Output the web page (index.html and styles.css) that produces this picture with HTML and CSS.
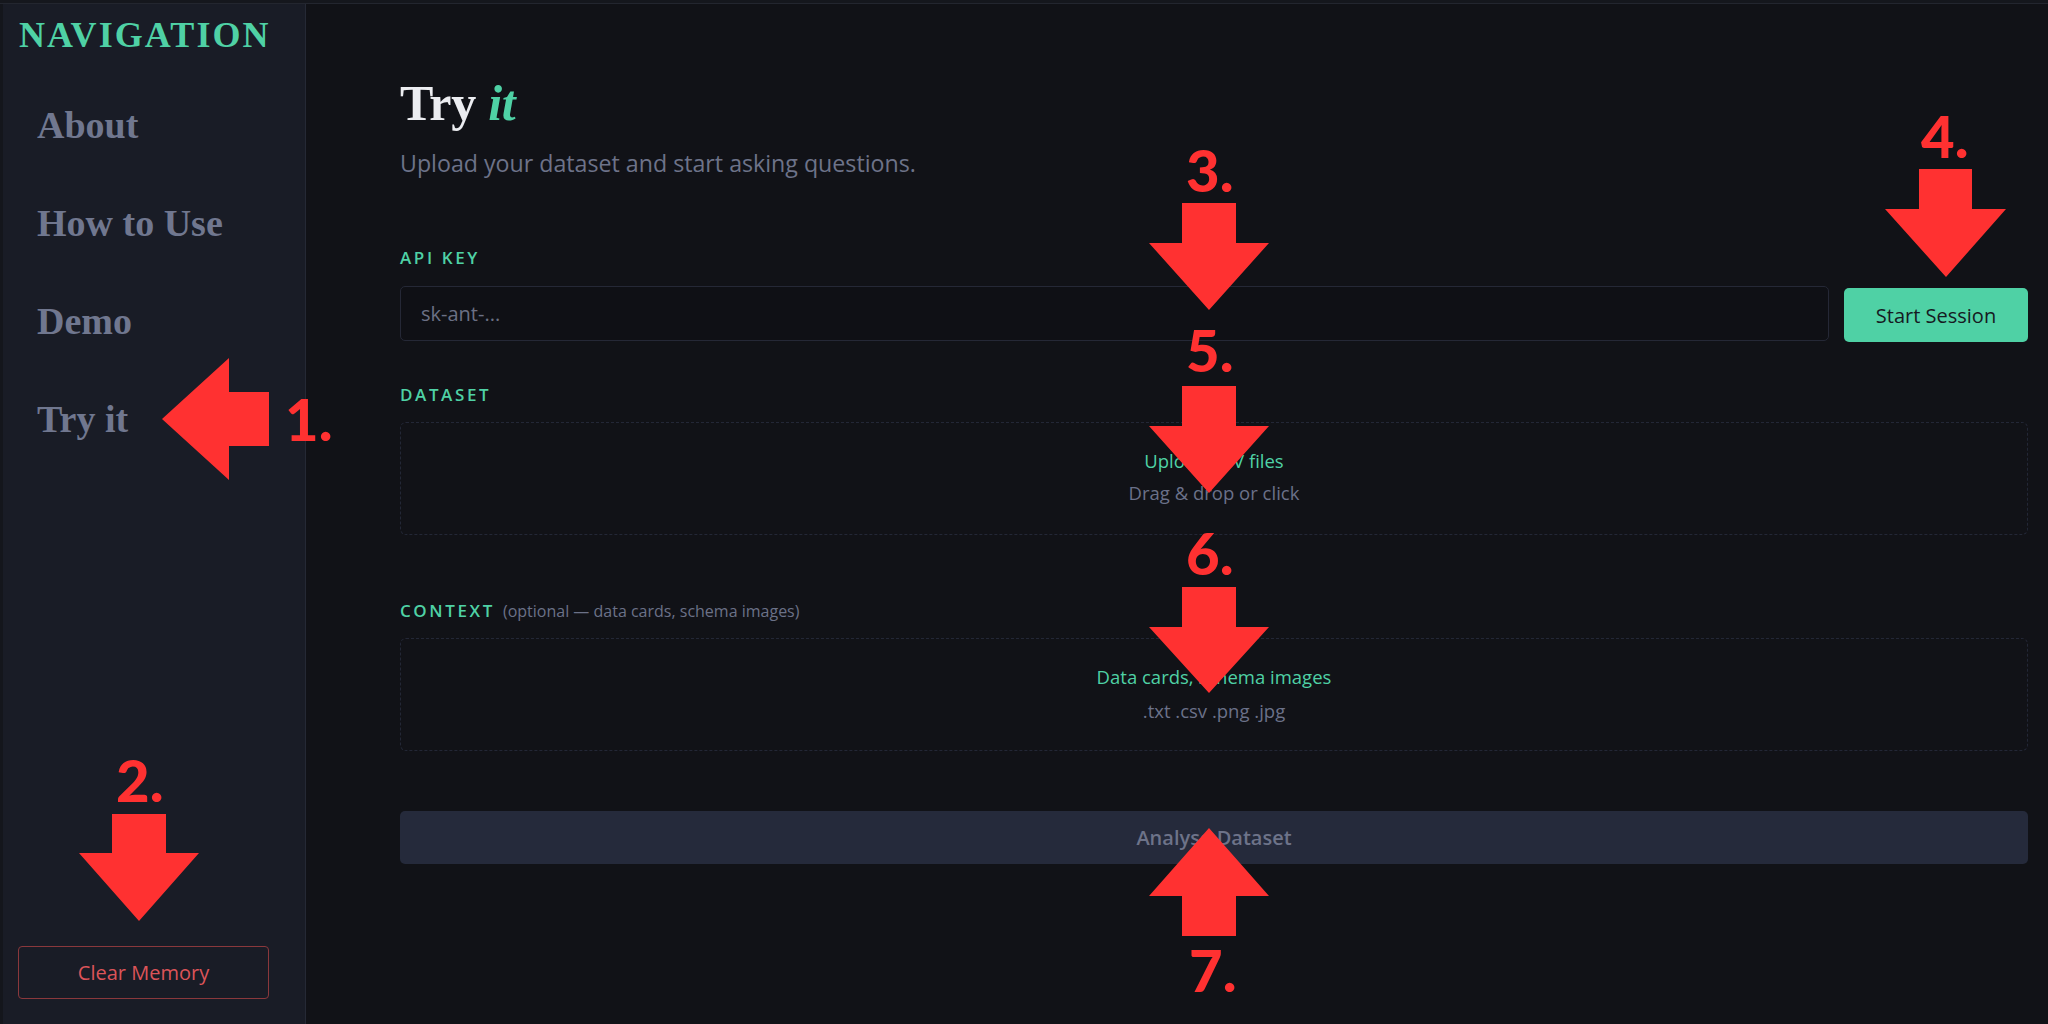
FILE: index.html
```html
<!DOCTYPE html>
<html lang="en">
<head>
<meta charset="utf-8">
<title>Try it</title>
<link rel="stylesheet" href="styles.css">
</head>
<body>
<div class="app">
  <aside class="sidebar">
    <div class="nav-title">NAVIGATION</div>
    <nav class="nav">
      <a class="nav-item">About</a>
      <a class="nav-item">How to Use</a>
      <a class="nav-item">Demo</a>
      <a class="nav-item">Try it</a>
    </nav>
    <button class="clear-btn">Clear Memory</button>
  </aside>
  <main class="main">
    <h1 class="title">Try <em>it</em></h1>
    <p class="subtitle">Upload your dataset and start asking questions.</p>

    <section class="field field-api">
      <div class="label">API KEY</div>
      <div class="api-row">
        <div class="input"><span class="placeholder">sk-ant-...</span></div>
        <button class="start-btn">Start Session</button>
      </div>
    </section>

    <section class="field field-dataset">
      <div class="label">DATASET</div>
      <div class="dropzone">
        <div class="dz-main">Upload CSV files</div>
        <div class="dz-sub">Drag &amp; drop or click</div>
      </div>
    </section>

    <section class="field field-context">
      <div class="label">CONTEXT <span class="label-note">(optional — data cards, schema images)</span></div>
      <div class="dropzone dropzone-ctx">
        <div class="dz-main">Data cards, schema images</div>
        <div class="dz-sub">.txt .csv .png .jpg</div>
      </div>
    </section>

    <button class="analyse-btn">Analyse Dataset</button>
  </main>
</div>

<svg class="annotations" width="2048" height="1024" viewBox="0 0 2048 1024" xmlns="http://www.w3.org/2000/svg">
  <g class="arrow">
    <!-- 1: left arrow -->
    <polygon points="162,419 229,358 229,392 269,392 269,446 229,446 229,480"/>
    <!-- 2 -->
    <polygon points="112,814 166,814 166,853 199,853 139,921 79,853 112,853"/>
    <!-- 3 -->
    <polygon points="1182,203 1236,203 1236,243 1269,243 1209,310 1149,243 1182,243"/>
    <!-- 4 -->
    <polygon points="1919,169 1972,169 1972,209 2006,209 1946,277 1885,209 1919,209"/>
    <!-- 5 -->
    <polygon points="1182,386 1236,386 1236,426 1269,426 1209,493 1149,426 1182,426"/>
    <!-- 6 -->
    <polygon points="1182,587 1236,587 1236,627 1269,627 1209,693 1149,627 1182,627"/>
    <!-- 7: up arrow -->
    <polygon points="1209,828 1269,896 1236,896 1236,936 1182,936 1182,896 1149,896"/>
  </g>
  <g class="nums">
    <text x="285" y="441">1.</text>
    <text x="116" y="802">2.</text>
    <text x="1186" y="192">3.</text>
    <text x="1921" y="158">4.</text>
    <text x="1186" y="372">5.</text>
    <text x="1186" y="575">6.</text>
    <text x="1189" y="992">7.</text>
  </g>
</svg>
</body>
</html>
```

FILE: styles.css
```css
* { box-sizing: border-box; }

html, body {
  margin: 0;
  padding: 0;
  width: 2048px;
  height: 1024px;
  overflow: hidden;
  background: #111217;
}

body {
  position: relative;
  font-family: "Open Sans", "Liberation Sans", sans-serif;
  border-top: 3px solid #15171d;
}

.app {
  display: flex;
  height: 1021px;
  border-top: 1px solid #23262f;
}

/* Sidebar */
.sidebar {
  width: 306px;
  flex: 0 0 306px;
  background: #191c26;
  border-left: 3px solid #14161c;
  border-right: 1px solid #252935;
  display: flex;
  flex-direction: column;
  padding: 13px 0 25px 15px;
}

.nav-title {
  font-family: "Liberation Serif", serif;
  font-weight: 700;
  font-size: 36px;
  line-height: 36px;
  letter-spacing: 2.1px;
  color: #4fd1a5;
  margin-left: 1px;
}

.nav {
  display: flex;
  flex-direction: column;
  margin-top: 23px;
  padding-left: 19px;
}

.nav-item {
  font-family: "Liberation Serif", serif;
  font-weight: 700;
  font-size: 38px;
  line-height: 98px;
  height: 98px;
  color: #70778f;
}

.clear-btn {
  margin-top: auto;
  width: 251px;
  height: 53px;
  background: transparent;
  border: 1px solid #8a383c;
  border-radius: 4px;
  color: #dc5459;
  font-family: "Open Sans", "Liberation Sans", sans-serif;
  font-size: 20px;
  font-weight: 500;
}

/* Main */
.main {
  flex: 1;
  padding: 72px 20px 0 94px;
}

.title {
  margin: 0;
  font-family: "Liberation Serif", serif;
  font-weight: 700;
  font-size: 50px;
  line-height: 55px;
  color: #ecedf1;
  letter-spacing: -0.3px;
}

.title em {
  color: #4fd1a5;
  font-style: italic;
}

.subtitle {
  margin: 16px 0 0;
  font-size: 23.2px;
  line-height: 32px;
  color: #6d7389;
}

.label {
  font-size: 17px;
  line-height: 20px;
  font-weight: 600;
  letter-spacing: 2.6px;
  color: #4fd1a5;
  margin-bottom: 18px;
}

.label-note {
  font-size: 16px;
  font-weight: 400;
  letter-spacing: 0;
  color: #6b7187;
  margin-left: 1px;
}

.field-api { margin-top: 69px; }
.field-dataset { margin-top: 43px; }
.field-context { margin-top: 66px; }
.field-dataset .label, .field-context .label { margin-bottom: 17px; }

.api-row {
  display: flex;
  gap: 15px;
}

.input {
  flex: 1;
  height: 55px;
  border: 1px solid #252836;
  border-radius: 5px;
  background: #0f1015;
  display: flex;
  align-items: center;
  padding-left: 20px;
}

.placeholder {
  font-size: 20px;
  color: #6b7084;
}

.start-btn {
  width: 184px;
  height: 54px;
  margin-top: 2px;
  border: none;
  border-radius: 5px;
  background: #4fd1a5;
  color: #161a22;
  font-family: "Open Sans", "Liberation Sans", sans-serif;
  font-size: 20px;
  font-weight: 500;
}

.dropzone {
  height: 113px;
  border: 1px dashed #232736;
  border-radius: 6px;
  display: flex;
  flex-direction: column;
  align-items: center;
  justify-content: center;
  gap: 6px;
  padding-bottom: 4px;
}

.dz-main {
  font-size: 18.5px;
  line-height: 26px;
  color: #4fd1a5;
}

.dz-sub {
  font-size: 18.5px;
  line-height: 26px;
  color: #6b7189;
}

.dropzone-ctx { gap: 8px; padding-bottom: 2px; }

.analyse-btn {
  display: block;
  width: 100%;
  height: 53px;
  margin-top: 60px;
  border: none;
  border-radius: 5px;
  background: #252a3b;
  color: #6d7389;
  font-family: "Open Sans", "Liberation Sans", sans-serif;
  font-size: 20px;
  font-weight: 600;
}

/* Annotation overlay */
.annotations {
  position: absolute;
  left: 0;
  top: -3px;
  pointer-events: none;
}

.arrow polygon {
  fill: #ff3131;
}

.nums text {
  fill: #ff3131;
  font-family: "Lato", "Liberation Sans", sans-serif;
  font-weight: 900;
  font-size: 58px;
}
```
